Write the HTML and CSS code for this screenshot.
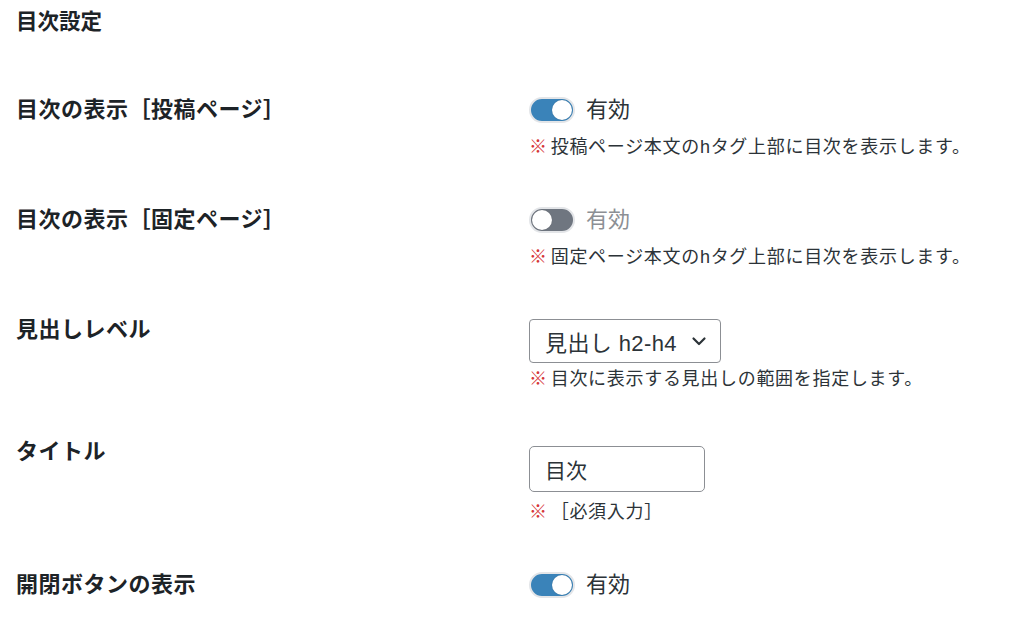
FILE: index.html
```html
<!DOCTYPE html>
<html lang="ja">
  <head>
    <meta charset="utf-8">
    <meta name="viewport" content="width=device-width, initial-scale=1.0" />
    <link rel="stylesheet" href="styles.css">
  </head>
  <body>
    <div class="settings">
      <h2 class="settings-title">目次設定</h2>

      <div class="settings-row">
        <div class="settings-label">目次の表示［投稿ページ］</div>
        <div class="settings-field">
          <label class="switch">
            <span class="switch-track is-on"><span class="switch-knob"></span></span>
            <span class="switch-text">有効</span>
          </label>
          <p class="note note-toggle"><span class="note-mark">※</span>投稿ページ本文のhタグ上部に目次を表示します。</p>
        </div>
      </div>

      <div class="settings-row">
        <div class="settings-label">目次の表示［固定ページ］</div>
        <div class="settings-field">
          <label class="switch is-disabled">
            <span class="switch-track"><span class="switch-knob"></span></span>
            <span class="switch-text">有効</span>
          </label>
          <p class="note note-toggle"><span class="note-mark">※</span>固定ページ本文のhタグ上部に目次を表示します。</p>
        </div>
      </div>

      <div class="settings-row">
        <div class="settings-label">見出しレベル</div>
        <div class="settings-field">
          <div class="select">
            <span class="select-value">見出し h2-h4</span>
            <svg class="select-arrow" width="18" height="18" viewBox="0 0 18 18">
              <path d="M3.5 6.5 L9 12 L14.5 6.5" fill="none" stroke="#2c3338" stroke-width="2.2" stroke-linecap="round" stroke-linejoin="round"/>
            </svg>
          </div>
          <p class="note note-select"><span class="note-mark">※</span>目次に表示する見出しの範囲を指定します。</p>
        </div>
      </div>

      <div class="settings-row">
        <div class="settings-label">タイトル</div>
        <div class="settings-field">
          <div class="text-input">目次</div>
          <p class="note note-input"><span class="note-mark">※</span>［必須入力］</p>
        </div>
      </div>

      <div class="settings-row">
        <div class="settings-label">開閉ボタンの表示</div>
        <div class="settings-field">
          <label class="switch">
            <span class="switch-track is-on"><span class="switch-knob"></span></span>
            <span class="switch-text">有効</span>
          </label>
        </div>
      </div>
    </div>
  </body>
</html>
```

FILE: styles.css
```css
body {
  margin: 0;
  background: #fff;
  color: #1d2327;
  font-family: "Liberation Sans", "Noto Sans CJK JP", sans-serif;
}

.settings {
  padding: 8px 0 0 16px;
}

.settings-title {
  margin: 0 0 60px;
  height: 28px;
  font-size: 21.5px;
  line-height: 28px;
  font-weight: 700;
}

.settings-row {
  display: grid;
  grid-template-columns: 513px 1fr;
  align-items: start;
  margin-bottom: 47px;
}

.settings-label {
  height: 28px;
  font-size: 22px;
  line-height: 28px;
  font-weight: 700;
  letter-spacing: 0.5px;
}

.settings-field {
  display: flex;
  flex-flow: column;
  align-items: flex-start;
}

.switch {
  display: flex;
  align-items: center;
  height: 28px;
  gap: 11px;
}
.switch-track {
  box-sizing: border-box;
  width: 46px;
  height: 26px;
  border: 2px solid #e3e5e8;
  border-radius: 13px;
  background: #6f7680;
  padding: 1px;
  display: flex;
  justify-content: flex-start;
}
.switch-track.is-on {
  background: #3a83b9;
  justify-content: flex-end;
}
.switch-knob {
  width: 20px;
  height: 20px;
  border-radius: 50%;
  background: #fff;
  box-shadow: 0 0 1px rgba(0, 0, 0, 0.3);
}
.switch-text {
  font-size: 22px;
  line-height: 28px;
  color: #2c3338;
}
.switch.is-disabled .switch-text {
  color: #8c8f94;
}

.note {
  margin: 0;
  height: 24px;
  font-size: 18px;
  line-height: 24px;
  color: #2c3338;
  letter-spacing: 0.7px;
  white-space: nowrap;
}
.note-mark {
  color: #d63638;
  font-size: 18px;
  font-weight: 700;
  margin-right: 3px;
}
.note-toggle {
  margin-top: 11px;
}
.note-select {
  margin-top: 4px;
}
.note-input {
  margin-top: 8px;
}

.select {
  box-sizing: border-box;
  margin-top: 3px;
  width: 192px;
  height: 44px;
  padding: 0 12px 0 15px;
  border: 1px solid #8c8f94;
  border-radius: 4px;
  display: flex;
  align-items: center;
  justify-content: space-between;
  font-size: 22px;
  color: #2c3338;
}
.select-value {
  letter-spacing: 0.4px;
}
.select-arrow {
  display: block;
}

.text-input {
  box-sizing: border-box;
  margin-top: 8px;
  width: 176px;
  height: 46px;
  padding: 0 15px;
  border: 1px solid #8c8f94;
  border-radius: 5px;
  display: flex;
  align-items: center;
  font-size: 21px;
  color: #2c3338;
}
```
